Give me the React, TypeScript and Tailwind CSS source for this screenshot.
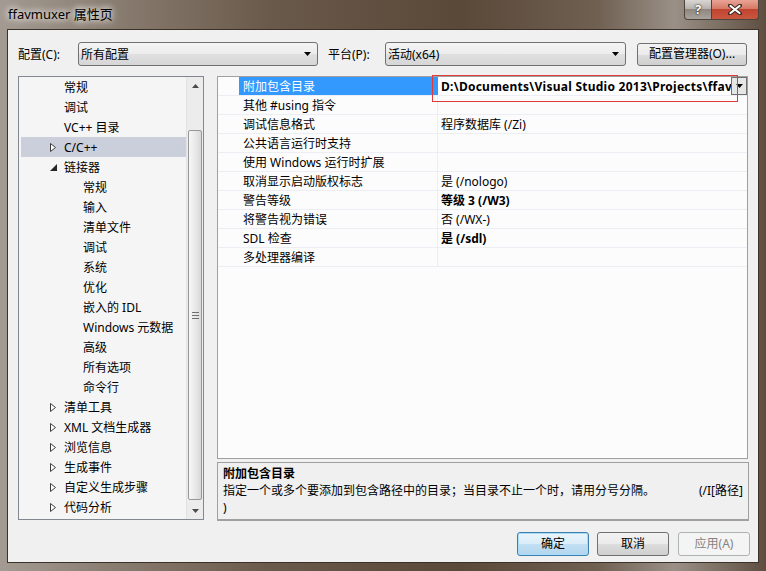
import React from "react";

const FONT = '"Noto Sans", "Noto Sans CJK SC", sans-serif';

type Node = [string, number, ("c" | "o" | "")?, boolean?];
const tree: Node[] = [
  ["常规", 0],
  ["调试", 0],
  ["VC++ 目录", 0],
  ["C/C++", 0, "c", true],
  ["链接器", 0, "o"],
  ["常规", 1],
  ["输入", 1],
  ["清单文件", 1],
  ["调试", 1],
  ["系统", 1],
  ["优化", 1],
  ["嵌入的 IDL", 1],
  ["Windows 元数据", 1],
  ["高级", 1],
  ["所有选项", 1],
  ["命令行", 1],
  ["清单工具", 0, "c"],
  ["XML 文档生成器", 0, "c"],
  ["浏览信息", 0, "c"],
  ["生成事件", 0, "c"],
  ["自定义生成步骤", 0, "c"],
  ["代码分析", 0, "c"],
];

const rows: [string, string, boolean?][] = [
  ["附加包含目录", ""],
  ["其他 #using 指令", ""],
  ["调试信息格式", "程序数据库 (/Zi)"],
  ["公共语言运行时支持", ""],
  ["使用 Windows 运行时扩展", ""],
  ["取消显示启动版权标志", "是 (/nologo)"],
  ["警告等级", "等级 3 (/W3)", true],
  ["将警告视为错误", "否 (/WX-)"],
  ["SDL 检查", "是 (/sdl)", true],
  ["多处理器编译", ""],
];

function DownArrow() {
  return (
    <svg width="7" height="4" viewBox="0 0 7 4">
      <path d="M0 0 H7 L3.5 4 Z" fill="#000" />
    </svg>
  );
}

function Combo({ text, w }: { text: string; w: string }) {
  return (
    <div
      className={`${w} h-[24px] flex items-center border border-[#707070] rounded-[3px] bg-[linear-gradient(180deg,#f4f4f4_0%,#ececec_50%,#e0e0e0_50%,#d6d6d6_100%)] pl-[2px] pr-[6px]`}
    >
      <span className="flex-1 text-[12px] text-black leading-none pt-[1px]">{text}</span>
      <DownArrow />
    </div>
  );
}

function Arrow({ kind }: { kind?: string }) {
  if (kind === "c")
    return (
      <svg width="6" height="9" viewBox="0 0 6 9">
        <path d="M0.5 0.5 L5.5 4.5 L0.5 8.5 Z" fill="#fff" stroke="#3c3c3c" strokeWidth="1" />
      </svg>
    );
  if (kind === "o")
    return (
      <svg width="7" height="7" viewBox="0 0 7 7">
        <path d="M7 0 L7 7 L0 7 Z" fill="#262626" />
      </svg>
    );
  return null;
}

export default function App() {
  return (
    <div
      className="w-[766px] h-[571px] flex flex-col overflow-hidden bg-[linear-gradient(90deg,#a39b93_0%,#8a7e72_14%,#6a5a4b_35%,#5a4838_60%,#6f6052_78%,#9a9087_88%,#5e4e40_100%)]"
      style={{ fontFamily: FONT }}
    >
      {/* title bar */}
      <div className="h-[29px] flex items-start shrink-0">
        <span className="pl-[8px] pt-[5px] text-[13px] text-black leading-[18px] [text-shadow:0_0_6px_#fff,0_0_10px_#fff]">
          ffavmuxer 属性页
        </span>
        <div className="ml-auto mr-[7px] flex">
          <div className="w-[28px] h-[20px] flex items-center justify-center border border-[#4e433a] border-t-0 rounded-bl-[4px] bg-[linear-gradient(180deg,#d9d6d3_0%,#b7b2ad_45%,#8f8780_50%,#a9a39d_100%)] text-white font-bold text-[13px] leading-none [text-shadow:0_0_2px_#222,0_0_1px_#000]">
            ?
          </div>
          <div className="w-[47px] h-[20px] flex items-center justify-center border border-[#4e433a] border-t-0 border-l-0 rounded-br-[4px] bg-[linear-gradient(180deg,#e8a495_0%,#d67a68_45%,#c24330_50%,#c8583f_100%)]">
            <svg width="14" height="11" viewBox="0 0 14 11">
              <path d="M2 1.5 L12 9.5 M12 1.5 L2 9.5" stroke="#3a2a25" strokeWidth="4" strokeLinecap="round" />
              <path d="M2.5 2 L11.5 9 M11.5 2 L2.5 9" stroke="#fff" strokeWidth="2.2" strokeLinecap="round" />
            </svg>
          </div>
        </div>
      </div>

      {/* client area */}
      <div className="mx-[7px] h-[534px] shrink-0 border border-[#3b3128] bg-[#f0f0f0] flex flex-col text-[12px] text-black">
        {/* top row */}
        <div className="mt-[12px] h-[24px] flex items-center pl-[10px]">
          <span className="w-[60px] leading-none pt-[1px]">配置(C):</span>
          <Combo text="所有配置" w="w-[240px]" />
          <span className="ml-[10px] w-[57px] leading-none pt-[1px]">平台(P):</span>
          <Combo text="活动(x64)" w="w-[241px]" />
          <div className="ml-[11px] w-[110px] h-[23px] flex items-center justify-center border border-[#707070] rounded-[3px] bg-[linear-gradient(180deg,#f2f2f2_0%,#ebebeb_50%,#dddddd_50%,#cfcfcf_100%)] leading-none">
            配置管理器(O)...
          </div>
        </div>

        {/* main */}
        <div className="mt-[10px] h-[445px] flex pl-[10px]">
          {/* tree */}
          <div className="w-[186px] h-[444px] border border-[#828790] bg-[#f5f5f5] flex">
            <div className="flex-1 flex flex-col">
              {tree.map(([t, lvl, arrow, sel], i) => (
                <div
                  key={i}
                  className={`h-[20px] shrink-0 ml-[2px] flex items-center ${sel ? "bg-[#cbcedb]" : ""}`}
                >
                  {lvl === 0 ? (
                    <>
                      <div className="w-[29px]" />
                      <div className="w-[14px] flex items-center">
                        <Arrow kind={arrow} />
                      </div>
                      <span className="leading-none whitespace-nowrap pt-[2px]">{t}</span>
                    </>
                  ) : (
                    <>
                      <div className="w-[62px]" />
                      <span className="leading-none whitespace-nowrap pt-[2px]">{t}</span>
                    </>
                  )}
                </div>
              ))}
            </div>
            {/* scrollbar */}
            <div className="w-[17px] flex flex-col bg-[#ececec] border-l border-[#e2e2e2]">
              <div className="h-[17px] flex items-center justify-center">
                <svg width="7" height="4" viewBox="0 0 7 4">
                  <path d="M0 4 H7 L3.5 0 Z" fill="#4a4a4a" />
                </svg>
              </div>
              <div className="h-[36px]" />
              <div className="h-[370px] mx-[1px] border border-[#979797] rounded-[2px] bg-[linear-gradient(90deg,#f6f6f6_0%,#e9e9e9_50%,#d8d8d8_100%)] flex items-center justify-center">
                <div className="flex flex-col gap-[2px]">
                  <div className="w-[7px] h-[1px] bg-[#707070]" />
                  <div className="w-[7px] h-[1px] bg-[#707070]" />
                  <div className="w-[7px] h-[1px] bg-[#707070]" />
                </div>
              </div>
              <div className="flex-1" />
              <div className="h-[17px] flex items-center justify-center">
                <svg width="7" height="4" viewBox="0 0 7 4">
                  <path d="M0 0 H7 L3.5 4 Z" fill="#4a4a4a" />
                </svg>
              </div>
            </div>
          </div>

          {/* right column */}
          <div className="ml-[13px] w-[532px] flex flex-col">
            <div className="h-[383px] w-[531px] border border-[#a0a0a0] bg-[#fcfcfc] relative">
              <div className="flex flex-col">
                {rows.map(([n, v, b], i) => (
                  <div key={i} className="h-[19px] flex border-b border-[#eceef4]">
                    <div className="w-[21px]" />
                    <div
                      className={`w-[199px] border-r border-[#eceef4] flex items-center pl-[4px] pt-[1px] leading-none whitespace-nowrap ${
                        i === 0 ? "bg-[#3399ff] text-white border-r-0" : ""
                      }`}
                    >
                      {n}
                    </div>
                    <div
                      className={`flex-1 min-w-0 flex items-center pl-[3px] leading-none whitespace-nowrap overflow-hidden ${
                        b ? "font-bold" : ""
                      } ${i === 0 ? "bg-white" : "pt-[1px]"}`}
                    >
                      {i === 0 ? (
                        <>
                          <span className="flex-1 min-w-0 font-bold overflow-hidden whitespace-nowrap tracking-[0.25px] pt-[1px]">
                            D:\Documents\Visual Studio 2013\Projects\ffav
                          </span>
                          <div className="w-[16px] h-[18px] border border-[#707070] bg-[#e6e6e6] flex items-center justify-center shrink-0">
                            <DownArrow />
                          </div>
                        </>
                      ) : (
                        v
                      )}
                    </div>
                  </div>
                ))}
              </div>
              {/* red annotation box */}
              <div className="absolute left-[214px] top-[-2px] w-[306px] h-[27px] border border-[#e03a3a] pointer-events-none" />
            </div>
            <div className="mt-[3px] h-[59px] border border-[#a0a0a0] border-b-2 bg-[#f0f0f0] pl-[5px] pr-[5px] pt-[2px] leading-[17px]">
              <div className="font-bold">附加包含目录</div>
              <div className="flex whitespace-nowrap">
                <span>指定一个或多个要添加到包含路径中的目录；当目录不止一个时，请用分号分隔。</span>
                <span className="ml-auto">(/I[路径]</span>
              </div>
              <div>)</div>
            </div>
          </div>
        </div>

        {/* buttons */}
        <div className="mt-[11px] h-[24px] flex justify-end pr-[8px] gap-[8px]">
          <div className="w-[72px] h-[24px] flex items-center justify-center rounded-[3px] border border-[#3c7fb1] bg-[linear-gradient(180deg,#eaf5fc_0%,#d9ecf8_50%,#c2e0f3_50%,#b1d5ee_100%)] shadow-[inset_0_0_0_1px_#a9dcf6] leading-none">
            确定
          </div>
          <div className="w-[72px] h-[24px] flex items-center justify-center rounded-[3px] border border-[#707070] bg-[linear-gradient(180deg,#f2f2f2_0%,#ebebeb_50%,#dddddd_50%,#cfcfcf_100%)] leading-none">
            取消
          </div>
          <div className="w-[72px] h-[24px] ml-[1px] flex items-center justify-center rounded-[3px] border border-[#adb2b5] bg-[#f4f4f4] text-[#838383] leading-none">
            应用(A)
          </div>
        </div>
      </div>
    </div>
  );
}
